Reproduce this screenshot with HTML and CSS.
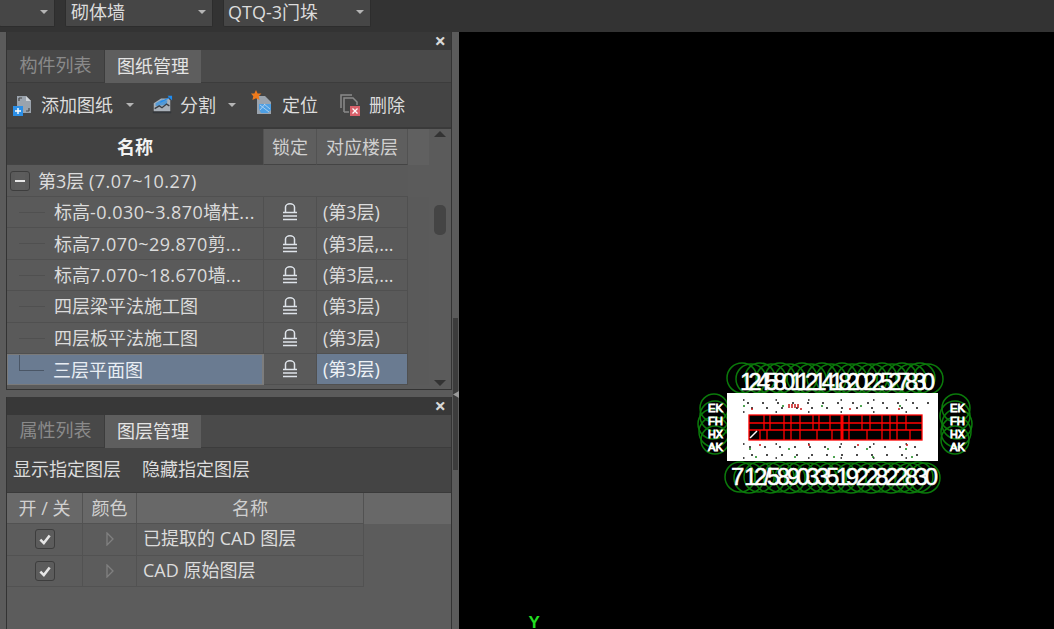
FILE: index.html
```html
<!DOCTYPE html>
<html lang="zh-CN">
<head>
<meta charset="utf-8">
<title>图纸管理</title>
<link rel="stylesheet" href="styles.css">
</head>
<body>
<div class="app">
  <header class="topbar">
    <div class="combo combo-a"><span class="combo-text"></span><i class="caret"></i></div>
    <div class="combo combo-b"><span class="combo-text">砌体墙</span><i class="caret"></i></div>
    <div class="combo combo-b combo-c"><span class="combo-text">QTQ-3门垛</span><i class="caret"></i></div>
  </header>
  <main class="main">
    <aside class="side">
      <i class="splitter"></i>
      <i class="diamond"></i>
      <section class="panel panel-top">
        <div class="titlebar"><span class="close">×</span></div>
        <div class="tabs">
          <div class="tab">构件列表</div>
          <div class="tab active">图纸管理</div>
        </div>
        <div class="toolbar">
          <div class="tool tool-add">
            <svg class="ico" viewBox="0 0 22 22"><path d="M5 2h9l5 5v12H5z" fill="#9aa3ad"/><path d="M14 2l5 5h-5z" fill="#cfd4d9"/><path d="M7 4h3M7 4v3M17 17h-3M17 17v-3" stroke="#4a4a4a" stroke-width="1.2" fill="none"/><rect x="1" y="12" width="10" height="10" fill="#2c8fe6"/><path d="M6 14v6M3 17h6" stroke="#fff" stroke-width="1.4"/></svg>
            <span>添加图纸</span><i class="caret"></i>
          </div>
          <div class="tool tool-split">
            <svg class="ico" viewBox="0 0 24 22"><path d="M3 9l8-5h8l2 2v12H3z" fill="#aab1b9"/><path d="M5 9l7-4 6 1-1 5-12 1z" fill="#3f93dc" opacity=".8"/><path d="M4 15l5-3 3 2 5-4 3 2" stroke="#3a3f45" stroke-width="1.5" fill="none"/><path d="M2 19h20" stroke="#33363a" stroke-width="2"/><path d="M18 1h5v5z" fill="#1f8cf0"/><path d="M10 8l10-5" stroke="#1f8cf0" stroke-width="1.2"/></svg>
            <span>分割</span><i class="caret"></i>
          </div>
          <div class="tool tool-pos">
            <svg class="ico" viewBox="0 0 24 26"><path d="M6 6h8l6 6v12H6z" fill="#9aa3ad"/><path d="M8 14h12v6l-3 3H10l-2-4z" fill="#4d9fe4"/><path d="M9 15l9 7M13 14l6 5M9 20l5-6" stroke="#bcd9f2" stroke-width=".8"/><path d="M5 0l1.600 3.400 3.800.2-2.700 2.600.9 3.800L5 8.200 1.400 10l.9-3.800L0 3.600l3.400-.2z" fill="#ee7a1c"/></svg>
            <span>定位</span>
          </div>
          <div class="tool tool-del">
            <svg class="ico" viewBox="0 0 24 24"><path d="M3 15V2h11" stroke="#8a8a8a" stroke-width="1.500" fill="none"/><path d="M6 19V5h9l4 4v3" stroke="#8a8a8a" stroke-width="1.500" fill="none"/><path d="M6 19h5" stroke="#8a8a8a" stroke-width="1.500"/><rect x="12" y="13" width="10" height="10" fill="#d9606a"/><path d="M14.500 15.500l5 5M19.500 15.500l-5 5" stroke="#fff" stroke-width="1.300"/></svg>
            <span>删除</span>
          </div>
        </div>
        <div class="grid-wrap">
          <div class="table">
            <div class="row head">
              <div class="cell name sorted">名称</div>
              <div class="cell lock">锁定</div>
              <div class="cell floor">对应楼层</div>
              <div class="cell spare"></div>
            </div>
            <div class="group">
              <span class="minus"></span><span>第3层 <span class="num">(7.07~10.27)</span></span>
            </div>
            <div class="row item">
              <div class="cell name"><i class="tree"></i><span>标高<span class="num">-0.030~3.870</span>墙柱<span class="num">...</span></span></div>
              <div class="cell lock"><svg class="padlock" viewBox="0 0 16 18"><use href="#lock"/></svg></div>
              <div class="cell floor">(第3层)</div>
            </div>
            <div class="row item">
              <div class="cell name"><i class="tree"></i><span>标高<span class="num">7.070~29.870</span>剪<span class="num">...</span></span></div>
              <div class="cell lock"><svg class="padlock" viewBox="0 0 16 18"><use href="#lock"/></svg></div>
              <div class="cell floor">(第3层,...</div>
            </div>
            <div class="row item">
              <div class="cell name"><i class="tree"></i><span>标高<span class="num">7.070~18.670</span>墙<span class="num">...</span></span></div>
              <div class="cell lock"><svg class="padlock" viewBox="0 0 16 18"><use href="#lock"/></svg></div>
              <div class="cell floor">(第3层,...</div>
            </div>
            <div class="row item">
              <div class="cell name"><i class="tree"></i><span>四层梁平法施工图</span></div>
              <div class="cell lock"><svg class="padlock" viewBox="0 0 16 18"><use href="#lock"/></svg></div>
              <div class="cell floor">(第3层)</div>
            </div>
            <div class="row item">
              <div class="cell name"><i class="tree"></i><span>四层板平法施工图</span></div>
              <div class="cell lock"><svg class="padlock" viewBox="0 0 16 18"><use href="#lock"/></svg></div>
              <div class="cell floor">(第3层)</div>
            </div>
            <div class="row item selected">
              <div class="cell name"><i class="tree last"></i><span>三层平面图</span></div>
              <div class="cell lock"><svg class="padlock" viewBox="0 0 16 18"><use href="#lock"/></svg></div>
              <div class="cell floor">(第3层)</div>
            </div>
          </div>
          <div class="scroll">
            <i class="arrow up"></i>
            <i class="thumb"></i>
            <i class="arrow down"></i>
          </div>
        </div>
      </section>

      <section class="panel panel-bottom">
        <div class="titlebar"><span class="close">×</span></div>
        <div class="tabs">
          <div class="tab">属性列表</div>
          <div class="tab active">图层管理</div>
        </div>
        <div class="toolbar toolbar-text">
          <span>显示指定图层</span>
          <span>隐藏指定图层</span>
        </div>
        <div class="layers">
          <div class="lrow lhead">
            <div class="lcell onoff">开 / 关</div>
            <div class="lcell color">颜色</div>
            <div class="lcell lname center">名称</div>
          </div>
          <div class="lrow">
            <div class="lcell onoff"><span class="check"><svg viewBox="0 0 12 12"><path d="M2 6.500l3 3 5-6.500" stroke="#e6e6e6" stroke-width="2.200" fill="none"/></svg></span></div>
            <div class="lcell color"><svg class="tri" viewBox="0 0 8 14"><path d="M1 1l6 6-6 6z" fill="none" stroke="#808080" stroke-width="1.300"/></svg></div>
            <div class="lcell lname">已提取的 CAD 图层</div>
          </div>
          <div class="lrow">
            <div class="lcell onoff"><span class="check"><svg viewBox="0 0 12 12"><path d="M2 6.500l3 3 5-6.500" stroke="#e6e6e6" stroke-width="2.200" fill="none"/></svg></span></div>
            <div class="lcell color"><svg class="tri" viewBox="0 0 8 14"><path d="M1 1l6 6-6 6z" fill="none" stroke="#808080" stroke-width="1.300"/></svg></div>
            <div class="lcell lname">CAD 原始图层</div>
          </div>
        </div>
      </section>
    </aside>

    <div class="canvas">
      <svg class="drawing" viewBox="0 0 595 597" width="595" height="597">
        <g fill="none" stroke="#0b7a0b" stroke-width="1.500">
          <circle cx="283" cy="346" r="15"/><circle cx="292" cy="347" r="15"/><circle cx="301" cy="346" r="15"/><circle cx="312" cy="347" r="15"/><circle cx="321" cy="346" r="15"/><circle cx="331" cy="347" r="15"/><circle cx="343" cy="346" r="15"/><circle cx="352" cy="347" r="15"/><circle cx="363" cy="346" r="15"/><circle cx="372" cy="347" r="15"/><circle cx="383" cy="346" r="15"/><circle cx="393" cy="347" r="15"/><circle cx="403" cy="346" r="15"/><circle cx="413" cy="347" r="15"/><circle cx="423" cy="346" r="15"/><circle cx="433" cy="347" r="15"/><circle cx="443" cy="346" r="15"/><circle cx="452" cy="347" r="15"/><circle cx="461" cy="346" r="15"/><circle cx="469" cy="347" r="15"/>
          <circle cx="281" cy="445" r="15"/><circle cx="290" cy="446" r="15"/><circle cx="300" cy="445" r="15"/><circle cx="311" cy="446" r="15"/><circle cx="320" cy="445" r="15"/><circle cx="331" cy="446" r="15"/><circle cx="341" cy="445" r="15"/><circle cx="351" cy="446" r="15"/><circle cx="362" cy="445" r="15"/><circle cx="372" cy="446" r="15"/><circle cx="382" cy="445" r="15"/><circle cx="392" cy="446" r="15"/><circle cx="402" cy="445" r="15"/><circle cx="412" cy="446" r="15"/><circle cx="422" cy="445" r="15"/><circle cx="432" cy="446" r="15"/><circle cx="442" cy="445" r="15"/><circle cx="451" cy="446" r="15"/><circle cx="459" cy="445" r="15"/><circle cx="466" cy="446" r="15"/>
          <circle cx="255" cy="376" r="14"/><circle cx="256" cy="384" r="15"/><circle cx="254" cy="392" r="15"/><circle cx="255" cy="400" r="15"/><circle cx="256" cy="408" r="14"/>
          <circle cx="497" cy="376" r="14"/><circle cx="496" cy="384" r="15"/><circle cx="498" cy="392" r="15"/><circle cx="497" cy="400" r="15"/><circle cx="496" cy="408" r="14"/>
        </g>
        <path fill="#fff" fill-rule="evenodd" d="M268 361H479V429H268ZM290 383V408H463V383Z"/>
        <g class="labels">
          <text x="281" y="358" font-size="24" textLength="195">12458011214182022527830</text>
          <text x="272" y="453" font-size="24" textLength="207">7 12/58903351922822830</text>
          <text font-size="11" class="side-label"><tspan x="249" y="380" textLength="15" lengthAdjust="spacingAndGlyphs">EK</tspan><tspan x="249" y="393" textLength="15" lengthAdjust="spacingAndGlyphs">FH</tspan><tspan x="249" y="406" textLength="15" lengthAdjust="spacingAndGlyphs">HX</tspan><tspan x="249" y="419" textLength="15" lengthAdjust="spacingAndGlyphs">AK</tspan></text>
          <text font-size="11" class="side-label"><tspan x="491" y="380" textLength="15" lengthAdjust="spacingAndGlyphs">EK</tspan><tspan x="491" y="393" textLength="15" lengthAdjust="spacingAndGlyphs">FH</tspan><tspan x="491" y="406" textLength="15" lengthAdjust="spacingAndGlyphs">HX</tspan><tspan x="491" y="419" textLength="15" lengthAdjust="spacingAndGlyphs">AK</tspan></text>
        </g>
        <g fill="none" stroke="#111" stroke-width="1.500">
          <path stroke-dasharray="2 13" d="M288 371H470M292 376H470M290 415H470M292 423H470"/>
          <path stroke-dasharray="1.500 31" d="M284 368H470M284 380H470M284 412H470M284 426H470"/>
        </g>
        <g fill="none" stroke="#c81414" stroke-width="1.500">
          <path stroke-dasharray="2 47" d="M292 377H470M300 413H470"/>
          <path d="M330 372v4M333 372v4M336 372v4M339 372v4"/>
        </g>
        <g fill="none" stroke="#16861a" stroke-width="1.500">
          <path stroke-dasharray="2 37" d="M284 374H470M290 417H470M296 425H470"/>
        </g>
        <g fill="none" stroke="#ff0000" stroke-width="1.300">
          <rect x="290" y="383" width="173" height="25"/>
          <path d="M290 391H463M290 398H463"/>
          <path d="M305 383V398M311 383V398M325 383V408M332 383V408M341 383V408M354 383V398M360 383V398M371 383V398M390 383V408M403 383V398M411 383V398M423 383V408M431 383V408M438 383V408M447 383V398"/>
          <path d="M301 398V408M308 398V408M358 398V408M373 398V408M408 398V408M451 398V408"/>
          <path d="M383 383V408" stroke-width="3"/>
        </g>
        <path d="M291 406l7-7" stroke="#fff" stroke-width="1.500"/>
        <text x="69.500" y="596" class="axis">Y</text>
      </svg>
    </div>
  </main>
</div>
<svg class="defs" width="0" height="0"><defs>
  <symbol id="lock" viewBox="0 0 16 18">
    <path d="M3.500 9V4a4.500 3.200 0 0 1 9 0V9" fill="none" stroke="#dfe4ea" stroke-width="1.500"/>
    <path d="M1 9.500h14M1 13h14M1 16.500h14" stroke="#dfe4ea" stroke-width="1.700"/>
  </symbol>
</defs></svg>
</body>
</html>
```
FILE: styles.css
```css
* { box-sizing: border-box; }
html, body { margin: 0; height: 100%; overflow: hidden; }
body {
  background: #000;
  color: #dcdcdc;
  font-family: "Open Sans", "Noto Sans CJK SC", sans-serif;
  font-size: 18px;
  line-height: 1;
}
.app { width: 1054px; height: 629px; display: flex; flex-direction: column; }
.num { letter-spacing: .45px; }

.topbar {
  height: 32px; flex: none; display: flex; gap: 10px; background: #333;
  padding-bottom: 5px;
}
.combo {
  display: flex; align-items: center; justify-content: space-between;
  background: #464646; border: 1px solid #2d2d2d; border-top: 0; padding: 0 6px 2px 5px;
  border-radius: 0 0 2px 2px;
}
.combo-a { width: 56px; margin-left: -1px; }
.combo-b { width: 148px; }
.combo-c { padding-left: 4px; }
.caret {
  display: inline-block; width: 0; height: 0; flex: none;
  border-left: 4px solid transparent; border-right: 4px solid transparent;
  border-top: 4px solid #b5b5b5;
}

.main { flex: 1; display: flex; min-height: 0; }
.side {
  position: relative;
  width: 459px; flex: none; padding: 0 7px 0 6px; background: #5b5b5b;
  display: flex; flex-direction: column; gap: 7px;
}
.splitter { position: absolute; right: 1px; top: 286px; width: 5px; height: 152px; background: #3c3c3c; }
.diamond { position: absolute; right: 0; top: 359px; width: 6px; height: 7px; background: #9a9a9a; clip-path: polygon(100% 0, 100% 100%, 0 50%); }
.panel { border-left: 1px solid #333; border-right: 1px solid #333; display: flex; flex-direction: column; }
.panel-top { height: 358px; flex: none; border-bottom: 1px solid #333; }
.panel-bottom { flex: 1; background: #5c5c5c; }

.titlebar {
  height: 18px; flex: none; background: #383838; display: flex; justify-content: flex-end; align-items: center; padding-right: 5px;
}
.close { font-size: 20px; color: #d8d8d8; font-weight: 700; line-height: 18px; }

.tabs { height: 33px; flex: none; display: flex; background: #4a4a4a; border-bottom: 1px solid #3c3c3c; }
.tab {
  width: 98px; display: flex; align-items: center; justify-content: center;
  color: #8a8a8a; background: #484848; border-right: 1px solid #3c3c3c; padding: 0 0 2px;
}
.tab.active { width: 96px; background: #5e5e5e; color: #e4e4e4; border-right: 0; margin-bottom: -1px; }

.toolbar {
  height: 46px; flex: none; display: flex; align-items: center; background: #444; padding-left: 5px;
  border-bottom: 2px solid #3a3a3a;
}
.tool { display: flex; align-items: center; gap: 7px; }
.tool .ico { width: 22px; height: 22px; flex: none; }
.tool .caret { margin-left: 6px; }
.tool-add { width: 139px; }
.tool-split { width: 100px; }
.tool-split .caret { margin-left: 5px; }
.tool-pos { width: 87px; }
.tool-pos .ico { width: 24px; height: 26px; margin-top: -4px; }
.tool-del .ico { width: 24px; height: 24px; }
.toolbar-text { height: 45px; gap: 21px; padding: 0 0 3px 6px; border-bottom: 1px solid #3a3a3a; }

.grid-wrap { flex: 1; display: flex; min-height: 0; background: #5b5b5b; }
.table { width: 422px; flex: none; }
.row { display: grid; grid-template-columns: 257px 53px 91px 21px; }
.item { height: 31.4px; grid-template-columns: 257px 53px 91px; background: #5a5a5a; }
.cell { display: flex; align-items: center; border-right: 1px solid #505050; border-bottom: 1px solid #505050; min-width: 0; white-space: nowrap; }
.head { height: 36px; }
.head .cell { justify-content: center; background: #5e5e5e; color: #d0d0d0; border-right: 1px solid #525252; border-bottom: 1px solid #444; }
.head .sorted { background: #424242; color: #f2f2f2; font-weight: 700; }
.head .spare { background: #606060; border: 0; }
.group { height: 32px; display: flex; align-items: center; gap: 8px; padding-left: 3px; background: #5a5a5a; border-bottom: 1px solid #505050; width: 401px; }
.minus { width: 20px; height: 20px; flex: none; border: 1px solid #3d3d3d; border-radius: 3px; background: linear-gradient(#5c5c5c 8px, #e6e6e6 8px, #e6e6e6 10px, #5c5c5c 10px); background-size: 10px 100%; background-repeat: no-repeat; background-position: center; }
.item .name { gap: 8px; }
.tree { display: block; width: 26px; height: 16px; margin: 0 1px 0 12px; align-self: flex-start; border-bottom: 1px solid #505050; flex: none; }
.tree.last { width: 25px; margin-left: 11px; border-left: 1px solid #4a5666; border-bottom-color: #4a5666; }
.lock { justify-content: center; }
.padlock { width: 16px; height: 18px; }
.floor { padding-left: 6px; }
.head .floor { padding-left: 0; }
.item.selected .name { background: #6a7b91; border: 1px solid #7a7a7a; border-right: 2px solid #7d7d7d; color: #e8edf3; }
.item.selected .floor { background: #6a7b91; color: #eef2f6; }

.scroll { flex: 1; position: relative; background: #5b5b5b; }
.arrow { position: absolute; left: 5px; width: 0; height: 0; border-left: 6px solid transparent; border-right: 6px solid transparent; }
.arrow.up { top: 2px; border-bottom: 6px solid #333; }
.arrow.down { bottom: 3px; border-top: 6px solid #333; }
.thumb { position: absolute; left: 5px; top: 76px; width: 12px; height: 30px; border-radius: 5px; background: #444; }

.layers { flex: 1; background: #5c5c5c; }
.lrow { display: grid; grid-template-columns: 76px 54px 227px; height: 31.5px; }
.lhead { background: #686868; height: 31px; color: #d0d0d0; width: 100%; }
.lcell { display: flex; align-items: center; border-right: 1px solid #525252; border-bottom: 1px solid #525252; justify-content: center; }
.lname { justify-content: flex-start; padding: 0 0 2px 6px; }
.lname.center { justify-content: center; padding: 0; color: #cfcfcf; }
.check { width: 20px; height: 20px; border: 1px solid #3d3d3d; border-radius: 3px; background: #5c5c5c; display: flex; align-items: center; justify-content: center; }
.check svg { width: 14px; height: 14px; }
.tri { width: 8px; height: 14px; }

.canvas { flex: 1; background: #000; min-width: 0; overflow: hidden; }
.drawing { display: block; }
.labels { font-family: "Liberation Sans", sans-serif; fill: #fff; stroke: #fff; stroke-width: .5px; }
.side-label { stroke-width: .9px; }
.axis { font-family: "Liberation Sans", sans-serif; font-size: 17px; font-weight: 700; fill: #22e022; }
.defs { position: absolute; }
```
